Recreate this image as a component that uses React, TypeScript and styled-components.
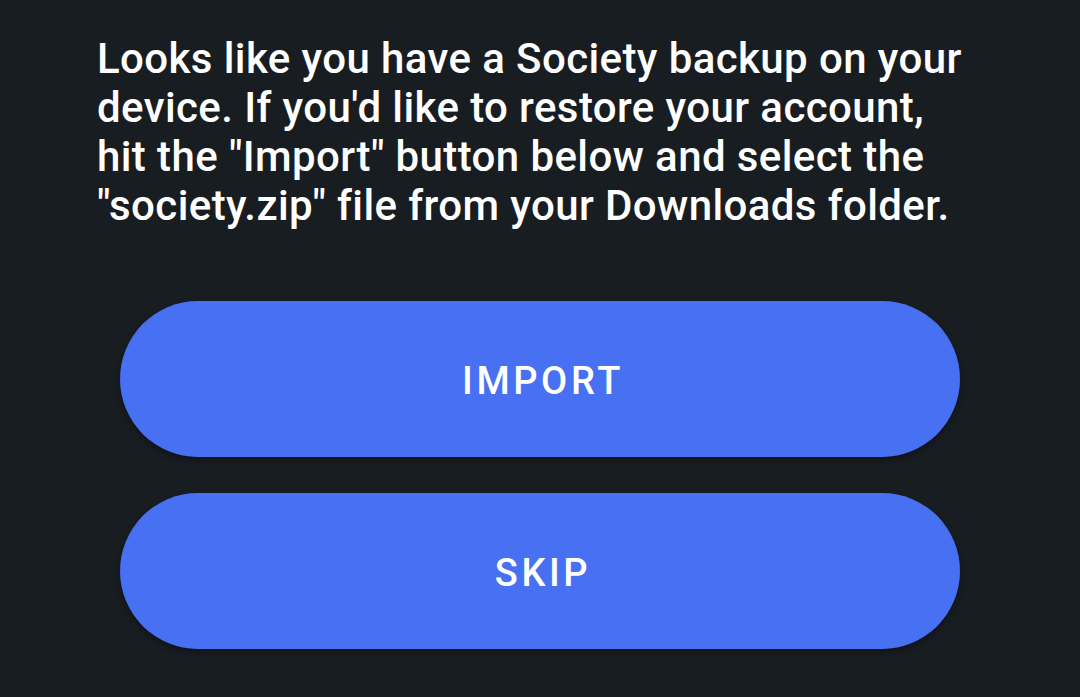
import React from "react";
import styled, { createGlobalStyle } from "styled-components";

const Global = createGlobalStyle`
  html, body {
    margin: 0;
    padding: 0;
    background: #181d22;
  }
`;

const App = () => {
  return (
    <>
      <Global />
      <Screen>
        <Message>
          Looks like you have a Society backup on your device. If you'd like to
          restore your account, hit the "Import" button below and select the
          "society.zip" file from your Downloads folder.
        </Message>
        <Actions>
          <PillButton>IMPORT</PillButton>
          <PillButton>SKIP</PillButton>
        </Actions>
      </Screen>
    </>
  );
};

export default App;

const Screen = styled.div`
  width: 1080px;
  height: 697px;
  box-sizing: border-box;
  padding: 34px 0 0 97px;
  display: flex;
  flex-direction: column;
  background: #181d22;
  font-family: Roboto, "Noto Sans", sans-serif;
  overflow: hidden;
`;

const Message = styled.p`
  margin: 0;
  width: 872px;
  color: #ffffff;
  font-size: 42px;
  font-weight: 500;
  line-height: 49px;
  letter-spacing: 0.4px;
`;

const Actions = styled.div`
  margin-top: 71px;
  width: 840px;
  padding-left: 23px;
  display: flex;
  flex-direction: column;
  gap: 36px;
`;

// trailing letter-spacing pushes the label left, so pad the left side to recentre
const PillButton = styled.button`
  height: 156px;
  padding: 4px 0 0 6px;
  border: none;
  border-radius: 78px;
  background: #4771f2;
  color: #ffffff;
  font-family: Roboto, "Noto Sans", sans-serif;
  font-size: 38px;
  font-weight: 500;
  letter-spacing: 3.6px;
  box-shadow: 0 3px 6px rgba(0, 0, 0, 0.35);
  cursor: pointer;
`;
